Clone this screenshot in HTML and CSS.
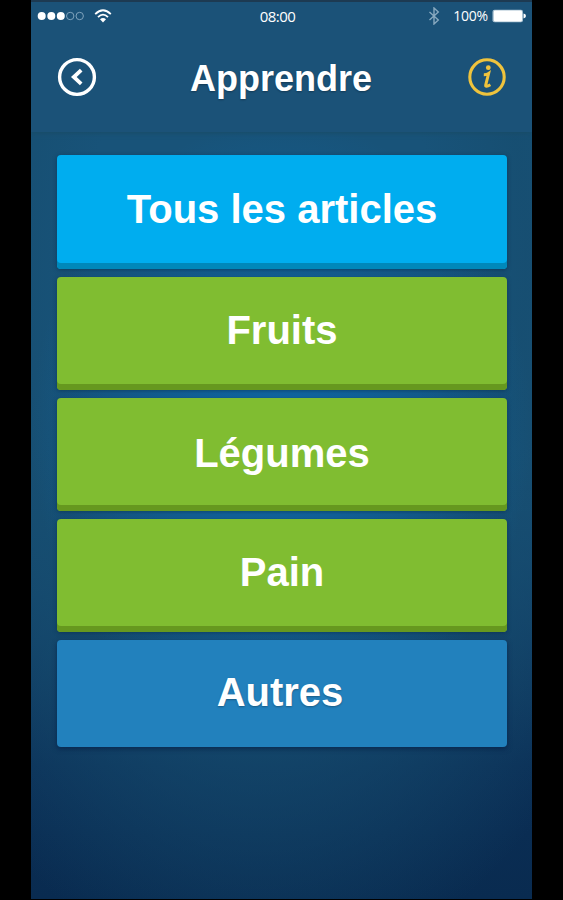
FILE: index.html
```html
<!DOCTYPE html>
<html lang="fr">
<head>
<meta charset="utf-8">
<title>Apprendre</title>
<link rel="stylesheet" href="styles.css">
</head>
<body>
<div class="phone">
  <header class="header">
    <div class="status">
      <div class="status-left">
        <svg width="48" height="12" viewBox="0 0 48 12"><g fill="#fff"><circle cx="4.7" cy="6" r="4"/><circle cx="14.3" cy="6" r="4"/><circle cx="23.8" cy="6" r="4"/></g><g fill="none" stroke="#7fa3bd" stroke-width="1"><circle cx="33.2" cy="6" r="3.7"/><circle cx="42.7" cy="6" r="3.7"/></g></svg>
        <svg class="wifi" width="18" height="14" viewBox="0 0 18 14" fill="none" stroke="#fff" stroke-width="1.8"><path d="M1.2 5.2Q9-2.6 16.8 5.2M4 8.2Q9 3.2 14 8.2"/><path d="M6 10.3Q9 7.6 12 10.3L9 13.6Z" fill="#fff" stroke="none"/></svg>
      </div>
      <span class="time">08:00</span>
      <div class="status-right">
        <svg width="12" height="18" viewBox="0 0 12 18" fill="none" stroke="#88a9bf" stroke-width="1.4"><path d="M1.5 5L10.3 13L6 17V1L10.3 5L1.5 13"/></svg>
        <span class="percent">100%</span>
        <svg width="34" height="14" viewBox="0 0 34 14"><rect x=".5" y=".7" width="30.5" height="12.6" rx="2" fill="#a9c1d1"/><rect x="1.8" y="1.6" width="28.2" height="10.8" rx="1.4" fill="#fff"/><path d="M31.5 4.6Q34 5 34 7Q34 9 31.5 9.4Z" fill="#fff"/></svg>
      </div>
    </div>
    <div class="nav">
      <svg width="40" height="40" viewBox="0 0 40 40" fill="none" stroke="#fff"><circle cx="20" cy="20" r="17.4" stroke-width="3.4"/><path d="M24.2 13.2L16.8 20L24.2 26.8" stroke-width="3.8"/></svg>
      <h1 class="title">Apprendre</h1>
      <svg width="40" height="40" viewBox="0 0 40 40" fill="none" stroke="#efc33d"><circle cx="20" cy="20" r="17.2" stroke-width="3.1"/><circle cx="21.3" cy="10.7" r="2.4" fill="#efc33d" stroke="none"/><path d="M16.8 17.7Q19.7 17.8 21.6 16.5L18.7 28.2Q18.2 30.7 23.4 27.8" stroke-width="3"/></svg>
    </div>
  </header>
  <main class="list">
    <button class="card all">Tous les articles</button>
    <button class="card">Fruits</button>
    <button class="card legumes">Légumes</button>
    <button class="card">Pain</button>
    <button class="card others">Autres</button>
  </main>
</div>
</body>
</html>
```
FILE: styles.css
```css
* {
  box-sizing: border-box;
}

body {
  margin: 0;
  background: #000;
  font-family: "Liberation Sans", Arial, sans-serif;
  color: #fff;
}

svg {
  display: block;
  flex: none;
}

.phone {
  width: 501px;
  height: 899px;
  margin-left: 31px;
  overflow: hidden;
  background:
    radial-gradient(ellipse 250px 310px at 50% 430px, #1068a6 0%, rgba(16, 104, 166, .75) 35%, rgba(16, 104, 166, 0) 100%),
    radial-gradient(ellipse 440px 720px at 46% 260px, rgba(24, 83, 121, 1) 40%, rgba(22, 78, 113, .85) 60%, rgba(22, 78, 113, 0) 100%),
    linear-gradient(#1a5278 0%, #1a5278 50%, #0b2f56 85%, #092b50 100%);
}

.header {
  height: 132px;
  background: #1b5278;
  border-top: 2px solid #1d3a52;
  box-shadow: 0 1px 5px #194c66;
}

.status {
  display: grid;
  grid-template-columns: 1fr auto 1fr;
  align-items: center;
  height: 27px;
  padding: 0 6px;
}

.status-left,
.status-right {
  display: flex;
  align-items: center;
}

.wifi {
  margin-left: 9px;
}

.status-right {
  justify-content: flex-end;
}

.time {
  margin-right: 8px;
  font: 15px "Open Sans", sans-serif;
  letter-spacing: -.5px;
}

.percent {
  margin: 0 4px 0 13px;
  font: 14px "Open Sans", sans-serif;
  letter-spacing: -.2px;
}

.nav {
  display: flex;
  align-items: center;
  justify-content: space-between;
  height: 96px;
  padding: 0 25px 0 26px;
}

.title {
  margin: 4px 2px 0 0;
  font-size: 36px;
  line-height: 42px;
  font-weight: bold;
  text-shadow: 0 1px 2px rgba(0, 0, 0, .3);
}

.list {
  display: grid;
  grid-template-rows: 114px 113px 113px 113px 107px;
  gap: 8px;
  padding: 23px 25px 0 26px;
}

.card {
  display: block;
  margin: 0;
  padding: 0 0 7px;
  border: 0;
  border-radius: 4px;
  background: #80bd31;
  box-shadow: inset 0 -6px #66981f, 0 1px 4px rgba(5, 35, 70, .5);
  color: #fff;
  font: bold 40px/46px "Liberation Sans", Arial, sans-serif;
}

.all {
  padding-bottom: 6px;
  background: #00adef;
  box-shadow: inset 0 -6px #0088ba, 0 1px 4px rgba(5, 35, 70, .5);
}

.legumes {
  padding-bottom: 3px;
}

.others {
  padding: 0 4px 4px 0;
  background: #2281bd;
  box-shadow: 0 2px 5px rgba(3, 25, 65, .6);
  text-shadow: 0 1px 2px rgba(0, 0, 0, .3);
}
```
